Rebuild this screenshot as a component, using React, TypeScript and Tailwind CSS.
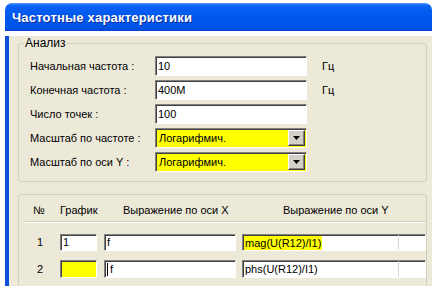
import React from "react";

const font = "font-['Liberation_Sans',Arial,sans-serif]";

// classic sunken edit box
const sunken =
  "border border-t-[#808080] border-l-[#808080] border-r-white border-b-white shadow-[inset_1px_1px_0_#404040]";

function Field({ value, className = "" }: { value: string; className?: string }) {
  return (
    <div className={`${sunken} flex h-[20px] w-[152px] items-center bg-white pl-[2px] text-black ${className}`}>
      {value}
    </div>
  );
}

function Combo({ value }: { value: string }) {
  return (
    <div className={`${sunken} flex h-[20px] w-[152px] items-center bg-[#FFFF00] text-black`}>
      <span className="flex-1 pl-[3px]">{value}</span>
      <div className="mr-[1px] flex h-[16px] w-[17px] items-center justify-center border border-t-white border-l-white border-r-[#404040] border-b-[#404040] bg-[#D4D0C8] shadow-[inset_-1px_-1px_0_#808080]">
        <svg width="7" height="4" viewBox="0 0 7 4">
          <path d="M0 0h7L3.5 4z" fill="#000" />
        </svg>
      </div>
    </div>
  );
}

const params = [
  { label: "Начальная частота :", value: "10", unit: "Гц" },
  { label: "Конечная частота :", value: "400M", unit: "Гц" },
  { label: "Число точек :", value: "100", unit: "" },
];

export default function App() {
  return (
    <div className={`${font} h-[286px] w-[432px] overflow-hidden bg-white`}>
      <div className="ml-[5px] mt-[3px] w-[427px]">
        {/* title bar */}
        <div className="flex h-[28px] items-center rounded-t-[7px] bg-[linear-gradient(to_bottom,#4A95FF_0%,#0D61F4_10%,#0058EE_45%,#0054E6_85%,#0046D6_100%)] pl-[7px] pt-[1px] text-[13px] font-bold tracking-[0.2px] text-white [text-shadow:1px_1px_0_#0A2A9A]">
          Частотные характеристики
        </div>

        {/* body */}
        <div className="h-[260px] border-l-[4px] border-[#0B4FDB] bg-[#ECE9D8] pl-[9px] text-[11px] text-black">
          <fieldset className="mt-[5px] w-[409px] rounded-[3px] border border-[#D0D0BF] pb-[9px]">
            <legend className="ml-[5px] px-[1px] text-[12px] leading-[14px]">Анализ</legend>
            <div className="mt-[6px] flex flex-col gap-[4px] pl-[11px]">
              {params.map((p) => (
                <div key={p.label} className="flex h-[20px] items-center">
                  <span className="w-[125px]">{p.label}</span>
                  <Field value={p.value} />
                  <span className="ml-[15px]">{p.unit}</span>
                </div>
              ))}
              <div className="flex h-[20px] items-center">
                <span className="w-[125px]">Масштаб по частоте :</span>
                <Combo value="Логарифмич." />
              </div>
              <div className="flex h-[20px] items-center">
                <span className="w-[125px]">Масштаб по оси Y :</span>
                <Combo value="Логарифмич." />
              </div>
            </div>
          </fieldset>

          <div className="mt-[12px] h-[100px] w-[409px] rounded-[3px] border border-[#D0D0BF]">
            <div className="ml-[6px] flex h-[27px] items-center border-b border-[#D0D0BF] pt-[4px] shadow-[0_1px_0_#fff]">
              <span className="w-[35px] pl-[8px]">№</span>
              <span className="w-[44px]">График</span>
              <span className="w-[138px] pl-[19px]">Выражение по оси X</span>
              <span className="pl-[41px]">Выражение по оси Y</span>
            </div>

            <div className="mt-[12px] flex h-[17px] items-center">
              <span className="w-[41px] pl-[18px]">1</span>
              <div className={`${sunken} flex h-[17px] w-[37px] items-center bg-white pl-[2px]`}>1</div>
              <div className={`${sunken} ml-[7px] flex h-[17px] w-[132px] items-center bg-white pl-[2px]`}>f</div>
              <div className={`${sunken} ml-[6px] flex h-[17px] w-[184px] items-center bg-white`}>
                <div className="flex h-full w-[156px] items-center border-r border-[#D8D8D8] pl-[1px]">
                  <span className="bg-[#FFFF00] px-[1px] leading-[14px]">mag(U(R12)/I1)</span>
                </div>
              </div>
            </div>

            <div className="mt-[9px] flex h-[18px] items-center">
              <span className="w-[41px] pl-[18px]">2</span>
              <div className={`${sunken} h-[18px] w-[37px] bg-[#FFFF00]`} />
              <div className={`${sunken} ml-[7px] flex h-[18px] w-[132px] items-center gap-[2px] bg-white pl-[2px]`}>
                <span className="h-[13px] w-px bg-black" />
                <span>f</span>
              </div>
              <div className={`${sunken} ml-[6px] flex h-[18px] w-[184px] items-center bg-white`}>
                <div className="flex h-full w-[156px] items-center border-r border-[#D8D8D8] pl-[2px]">
                  phs(U(R12)/I1)
                </div>
              </div>
            </div>
          </div>
        </div>
      </div>
    </div>
  );
}
